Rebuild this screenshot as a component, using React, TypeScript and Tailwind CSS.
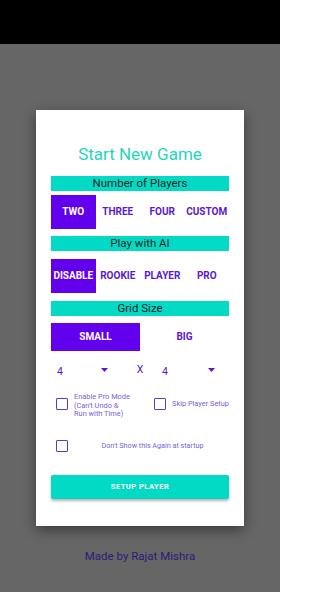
import React from "react";

const font = { fontFamily: "Roboto, 'Noto Sans', sans-serif" };

function SectionBar({ label }: { label: string }) {
  return (
    <div className="h-[15px] bg-[#03dac5] flex items-center justify-center text-[11.5px] leading-none text-[#1f1f1f]">
      {label}
    </div>
  );
}

function Options({ items, active, height }: { items: string[]; active: number; height: string }) {
  return (
    <div className={`flex ${height}`}>
      {items.map((item, i) => (
        <div
          key={item}
          className={`flex-1 flex items-center justify-center text-[10px] font-bold leading-none ${
            i === active ? "bg-[#6200ee] text-white" : "text-[#5b17d6]"
          }`}
        >
          {item}
        </div>
      ))}
    </div>
  );
}

function Caret() {
  return (
    <svg width="7" height="4" viewBox="0 0 7 4">
      <path d="M0 0h7L3.5 4z" fill="#5b17d6" />
    </svg>
  );
}

function Box() {
  return <div className="w-[12px] h-[12px] border-[1.5px] border-[#5a3bc8] rounded-[1px] shrink-0" />;
}

export default function App() {
  return (
    <div className="w-[280px] h-[592px] flex flex-col bg-[#666666]" style={font}>
      <div className="h-[44px] bg-black shrink-0" />
      <div className="flex-1 flex flex-col items-center">
        <div className="mt-[66px] w-[208px] h-[416px] bg-white shadow-[0_4px_12px_rgba(0,0,0,0.45)] px-[15px] flex flex-col">
          <div className="mt-[34px] h-[20px] flex items-center justify-center text-[17px] text-[#1fd6bb] leading-none">
            Start New Game
          </div>
          <div className="mt-[12px]">
            <SectionBar label="Number of Players" />
          </div>
          <div className="mt-[4px]">
            <Options items={["TWO", "THREE", "FOUR", "CUSTOM"]} active={0} height="h-[34px]" />
          </div>
          <div className="mt-[7px]">
            <SectionBar label="Play with AI" />
          </div>
          <div className="mt-[8px]">
            <Options items={["DISABLE", "ROOKIE", "PLAYER", "PRO"]} active={0} height="h-[34px]" />
          </div>
          <div className="mt-[8px]">
            <SectionBar label="Grid Size" />
          </div>
          <div className="mt-[7px]">
            <Options items={["SMALL", "BIG"]} active={0} height="h-[28px]" />
          </div>
          <div className="mt-[9px] h-[20px] flex items-center text-[10.5px] text-[#5b17d6] leading-none">
            <div className="w-[57px] pl-[6px] flex items-center justify-between">
              <span className="mt-[4px]">4</span>
              <Caret />
            </div>
            <div className="ml-[29px] w-[6px] flex justify-center">X</div>
            <div className="ml-[19px] w-[53px] flex items-center justify-between">
              <span className="mt-[4px]">4</span>
              <Caret />
            </div>
          </div>
          <div className="mt-[13px] flex items-start text-[7.4px] text-[#7a63d6] leading-[8.5px]">
            <div className="ml-[5px] mt-[5px]">
              <Box />
            </div>
            <div className="ml-[6px] w-[70px]">
              Enable Pro Mode
              <br />
              (Can't Undo &amp;
              <br />
              Run with Time)
            </div>
            <div className="ml-[13px] mt-[5px]">
              <Box />
            </div>
            <div className="ml-[6px] mt-[7px] whitespace-nowrap">Skip Player Setup</div>
          </div>
          <div className="mt-[21px] flex items-center text-[7.2px] text-[#7a63d6] leading-none">
            <div className="ml-[5px]">
              <Box />
            </div>
            <div className="flex-1 text-center pl-[8px] whitespace-nowrap">Don't Show this Again at startup</div>
          </div>
          <div className="mt-[23px] h-[24px] bg-[#03dac5] rounded-[2px] shadow-[0_2px_3px_rgba(0,0,0,0.3)] flex items-center justify-center text-white text-[7.5px] font-bold tracking-[0.5px] leading-none">
            SETUP PLAYER
          </div>
        </div>
        <div className="mt-[25px] text-[11.5px] text-[#2a1d78] leading-none">Made by Rajat Mishra</div>
      </div>
    </div>
  );
}
